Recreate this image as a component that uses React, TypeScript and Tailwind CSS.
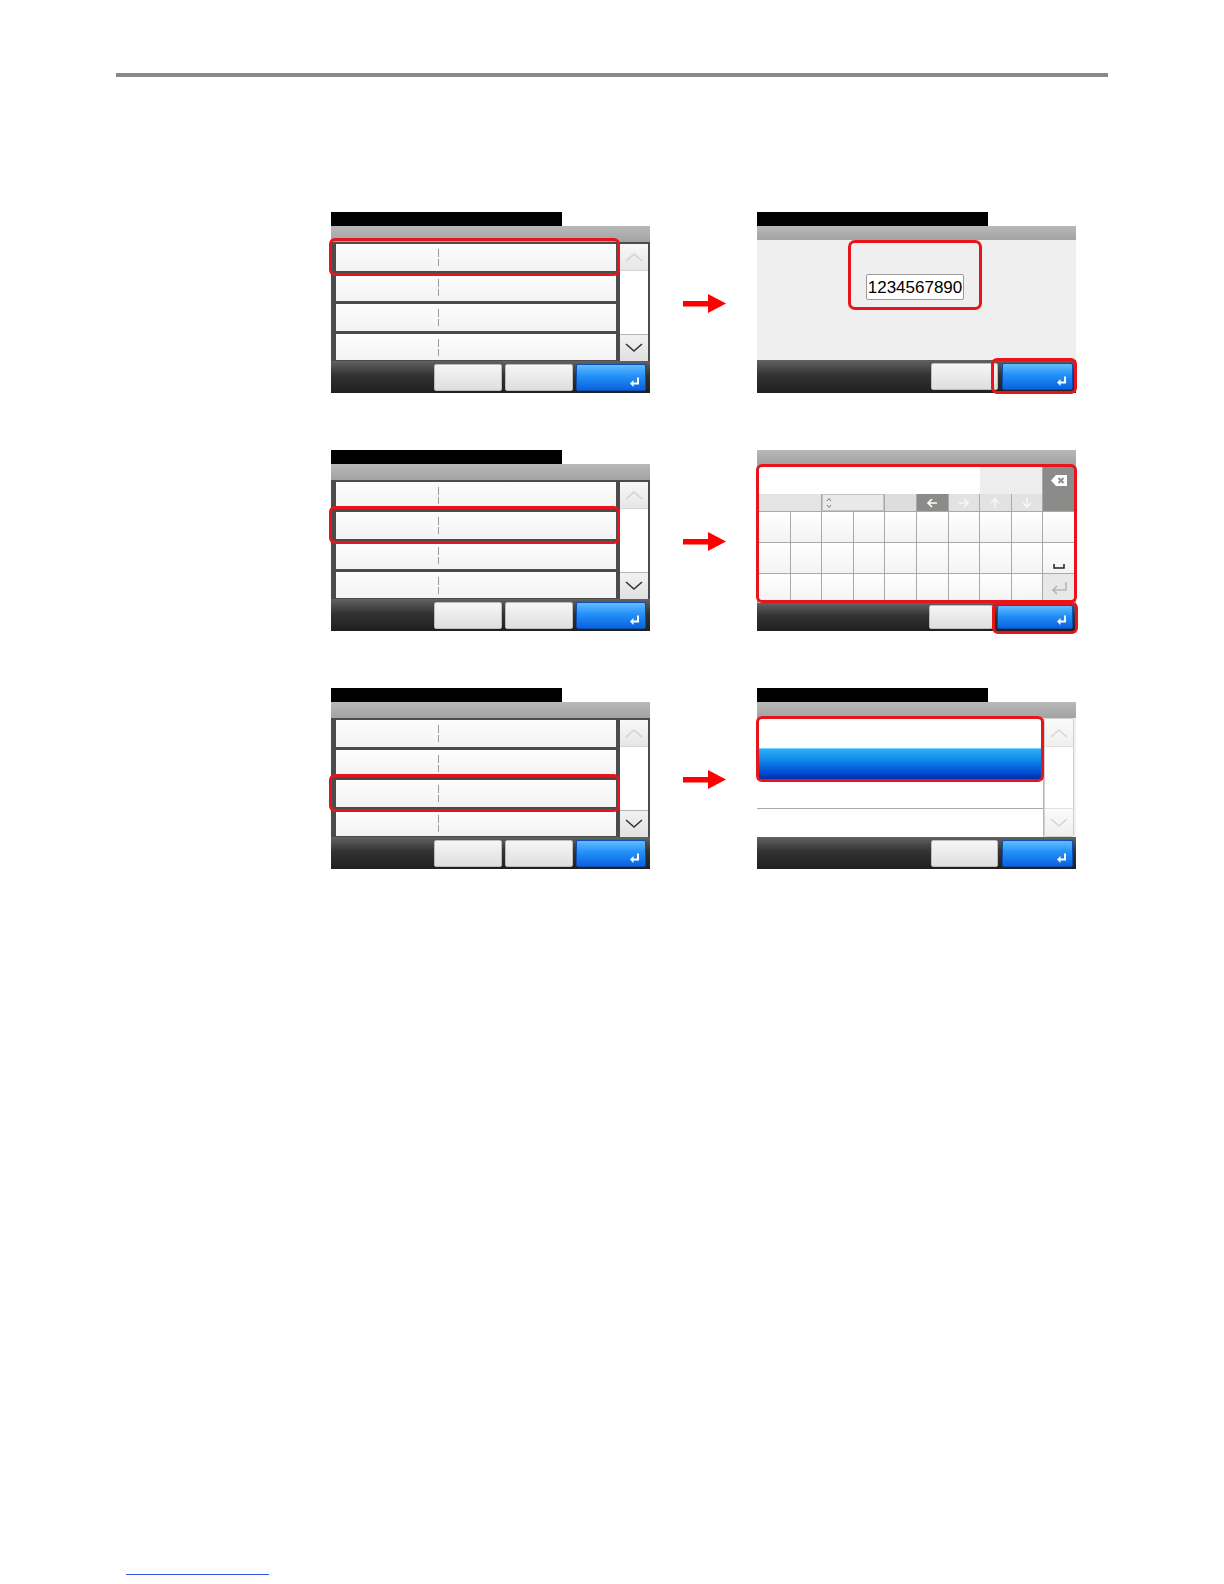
import React from "react";

const RED = "border-[3px] border-[#e8141c] rounded-[6px]";
const BAR = "bg-[linear-gradient(to_bottom,#626262,#333333_45%,#1f1f1f)]";
const GRAYBTN = "bg-[linear-gradient(to_bottom,#f6f6f6,#dedede)] border border-[#bcbcbc] rounded-[2px]";
const BLUEBTN = "relative bg-[linear-gradient(to_bottom,#63bcff,#2290f7_45%,#0a62e0)] border border-[#0d4fb0] rounded-[2px]";
const HEAD = "bg-[linear-gradient(to_bottom,#b8b8b8,#a3a3a3)]";

function EnterIcon() {
  return (
    <svg width="11" height="10" viewBox="0 0 11 10" className="absolute right-[5px] bottom-[3px]">
      <path d="M9 0.5 V6.5 H3.5" stroke="white" strokeWidth="2" fill="none" />
      <path d="M4.5 3 L1 6.5 L4.5 10 Z" fill="white" />
    </svg>
  );
}

function Chevron({ up, color }: { up?: boolean; color: string }) {
  return (
    <svg width="18" height="10" viewBox="0 0 18 10">
      <polyline
        points={up ? "1,9 9,2 17,9" : "1,1 9,8 17,1"}
        stroke={color}
        strokeWidth="1.6"
        fill="none"
      />
    </svg>
  );
}

function Arrow() {
  return (
    <div className="w-[107px] pl-[33px] pt-[82px]">
      <svg width="43" height="19" viewBox="0 0 43 19">
        <rect x="0" y="7" width="26" height="5.5" fill="#ff0000" />
        <polygon points="25,0 43,9.5 25,19" fill="#ff0000" />
      </svg>
    </div>
  );
}

function ListPanel({ hl }: { hl: number }) {
  const hs = ["h-[27px]", "h-[27px]", "h-[27px]", "h-[26px]"];
  return (
    <div className="w-[319px] flex flex-col">
      <div className="w-[231px] h-[14px] bg-black" />
      <div className={`h-[16px] ${HEAD}`} />
      <div className="h-[119px] flex bg-[#4b4b4b]">
        <div className="w-[289px] pl-[5px] pr-[4px] pt-[2px] flex flex-col gap-[3px]">
          {hs.map((h, i) => (
            <div
              key={i}
              className={`relative ${h} flex items-center bg-[linear-gradient(to_bottom,#fdfdfd,#f3f3f3)]`}
            >
              <div className="ml-[102px] flex flex-col gap-[2px]">
                <div className="w-px h-[8px] bg-[#9c9c9c]" />
                <div className="w-px h-[7px] bg-[#9c9c9c]" />
              </div>
              {hl === i && (
                <div className={`absolute -top-[6px] -bottom-[5px] -left-[7px] -right-[4px] z-10 ${RED}`} />
              )}
            </div>
          ))}
        </div>
        <div className="w-[28px] mt-[2px] flex flex-col bg-white">
          <div className="h-[27px] flex items-center justify-center bg-[linear-gradient(to_bottom,#f8f8f8,#e6e6e6)] border-b border-[#d4d4d4]">
            <Chevron up color="#d2d2d2" />
          </div>
          <div className="flex-1" />
          <div className="h-[27px] flex items-center justify-center bg-[linear-gradient(to_bottom,#f2f2f2,#e0e0e0)] border-t border-[#b4b4b4]">
            <Chevron color="#333333" />
          </div>
        </div>
        <div className="w-[2px]" />
      </div>
      <div className={`h-[32px] flex items-center justify-end pr-[4px] gap-[3px] ${BAR}`}>
        <div className={`w-[68px] h-[27px] ${GRAYBTN}`} />
        <div className={`w-[68px] h-[27px] ${GRAYBTN}`} />
        <div className={`w-[70px] h-[27px] ${BLUEBTN}`}>
          <EnterIcon />
        </div>
      </div>
    </div>
  );
}

function NumberPanel() {
  return (
    <div className="w-[319px] flex flex-col">
      <div className="w-[231px] h-[14px] bg-black" />
      <div className={`h-[14px] ${HEAD}`} />
      <div className="h-[120px] bg-[#efefef] pl-[91px]">
        <div className="w-[134px] h-[70px] flex justify-center pt-[31px] border-[3px] border-[#e8141c] rounded-[7px]">
          <div className="w-[98px] h-[26px] bg-white border border-[#9a9a9a] rounded-[2px] flex items-center justify-center text-[17px] leading-none text-black font-['Liberation_Sans',sans-serif]">
            1234567890
          </div>
        </div>
      </div>
      <div className={`h-[33px] flex items-center justify-end pr-[3px] gap-[4px] ${BAR}`}>
        <div className={`w-[67px] h-[27px] ${GRAYBTN}`} />
        <div className={`w-[71px] h-[27px] ${BLUEBTN}`}>
          <EnterIcon />
          <div className={`absolute -left-[12px] -right-[5px] -top-[6px] -bottom-[5px] z-10 ${RED}`} />
        </div>
      </div>
    </div>
  );
}

function SmallArrow({ dir, color }: { dir: "l" | "r" | "u" | "d"; color: string }) {
  const rot = dir === "l" ? 0 : dir === "r" ? 180 : dir === "u" ? 90 : 270;
  return (
    <svg width="12" height="12" viewBox="0 0 12 12" style={{ transform: `rotate(${rot}deg)` }}>
      <path d="M11 6 H2 M6 2 L2 6 L6 10" stroke={color} strokeWidth="1.6" fill="none" />
    </svg>
  );
}

function KeyboardPanel() {
  const keys = Array.from({ length: 30 }, (_, i) => i);
  return (
    <div className="w-[319px] flex flex-col">
      <div className={`h-[14px] ${HEAD}`} />
      <div className="relative h-[139px] bg-[#a9a9a9] pt-[2px] px-[2px] flex flex-col gap-px">
        <div className="grid grid-cols-10 grid-rows-[28px_17px] gap-x-px">
          <div className="col-span-9 flex">
            <div className="flex-[218] bg-white" />
            <div className="flex-[62] bg-[#eeeeee]" />
          </div>
          <div className="row-span-2 bg-[#8b8b89] flex justify-center pt-[9px]">
            <svg width="16" height="11" viewBox="0 0 16 11">
              <path d="M5 0 H16 V11 H5 L0 5.5 Z" fill="white" />
              <path d="M7.5 3 L12.5 8 M12.5 3 L7.5 8" stroke="#8b8b89" strokeWidth="1.8" />
            </svg>
          </div>
          <div className="col-span-2 bg-[#e4e4e4]" />
          <div className="col-span-2 bg-[#e9e9e9] border border-[#c4c4c4] flex items-center pl-[3px]">
            <svg width="6" height="12" viewBox="0 0 6 12">
              <path d="M1 4 L3 1.5 L5 4 M1 8 L3 10.5 L5 8" stroke="#777" strokeWidth="1" fill="none" />
            </svg>
          </div>
          <div className="bg-[#dddddd]" />
          <div className="bg-[#8b8b89] flex items-center justify-center">
            <SmallArrow dir="l" color="#ffffff" />
          </div>
          <div className="bg-[#e2e2e2] flex items-center justify-center">
            <SmallArrow dir="r" color="#f7f7f7" />
          </div>
          <div className="bg-[#e2e2e2] flex items-center justify-center">
            <SmallArrow dir="u" color="#f7f7f7" />
          </div>
          <div className="bg-[#e2e2e2] flex items-center justify-center">
            <SmallArrow dir="d" color="#f7f7f7" />
          </div>
        </div>
        <div className="grid grid-cols-10 grid-rows-[30px_30px_29px] gap-px">
          {keys.map((k) => {
            if (k === 19)
              return (
                <div key={k} className="bg-[linear-gradient(to_bottom,#ffffff,#f3f3f3)] flex items-end justify-center pb-[4px]">
                  <svg width="12" height="5" viewBox="0 0 12 5">
                    <path d="M1 0 V4 H11 V0" stroke="#222" strokeWidth="1.5" fill="none" />
                  </svg>
                </div>
              );
            if (k === 29)
              return (
                <div key={k} className="bg-[#e8e8e8] flex items-center justify-center">
                  <svg width="20" height="15" viewBox="0 0 20 15">
                    <path d="M17 1 V9 H4 M8 5 L4 9 L8 13" stroke="#b5b5b5" strokeWidth="1.6" fill="none" />
                  </svg>
                </div>
              );
            return <div key={k} className="bg-[linear-gradient(to_bottom,#ffffff,#f3f3f3)]" />;
          })}
        </div>
        <div className={`absolute -left-[1px] -right-[1px] top-0 bottom-0 z-10 ${RED}`} />
      </div>
      <div className={`h-[28px] flex items-center justify-end pr-[3px] gap-[4px] ${BAR}`}>
        <div className={`w-[64px] h-[24px] ${GRAYBTN}`} />
        <div className={`w-[76px] h-[24px] ${BLUEBTN}`}>
          <EnterIcon />
          <div className={`absolute -left-[6px] -right-[6px] -top-[4px] -bottom-[6px] z-10 ${RED}`} />
        </div>
      </div>
    </div>
  );
}

function SelectPanel() {
  return (
    <div className="w-[319px] flex flex-col">
      <div className="w-[231px] h-[14px] bg-black" />
      <div className={`h-[16px] ${HEAD}`} />
      <div className="h-[119px] flex bg-white">
        <div className="relative w-[287px] flex flex-col border-r border-[#b8b8b8]">
          <div className="h-[30px] bg-white" />
          <div className="h-[32px] border-t border-[#6fd0ff] bg-[linear-gradient(to_bottom,#2cb0f5,#1088ea_35%,#0050d2_75%,#0028aa)]" />
          <div className="h-[29px] border-b border-[#a8a8a8] bg-white" />
          <div className="flex-1 bg-white" />
          <div className={`absolute -top-[2px] h-[66px] -left-[1px] -right-[1px] z-10 ${RED}`} />
        </div>
        <div className="w-[30px] flex flex-col border border-[#cfcfcf] rounded-[2px]">
          <div className="h-[28px] flex items-center justify-center border-b border-[#e0e0e0] bg-[linear-gradient(to_bottom,#fbfbfb,#efefef)]">
            <Chevron up color="#d6d6d6" />
          </div>
          <div className="flex-1 bg-white" />
          <div className="h-[28px] flex items-center justify-center border-t border-[#e0e0e0] bg-[linear-gradient(to_bottom,#fbfbfb,#efefef)]">
            <Chevron color="#d6d6d6" />
          </div>
        </div>
        <div className="w-[2px] bg-[#f2f2f2]" />
      </div>
      <div className={`h-[32px] flex items-center justify-end pr-[3px] gap-[4px] ${BAR}`}>
        <div className={`w-[67px] h-[27px] ${GRAYBTN}`} />
        <div className={`w-[71px] h-[27px] ${BLUEBTN}`}>
          <EnterIcon />
        </div>
      </div>
    </div>
  );
}

export default function App() {
  return (
    <div className="w-[1224px] h-[1584px] bg-white overflow-hidden">
      <div className="pt-[73px] pl-[116px]">
        <div className="w-[992px] h-[4px] bg-[#8a8a8a]" />
      </div>
      <div className="mt-[135px] ml-[331px] flex flex-col gap-[57px]">
        <div className="flex items-start h-[181px]">
          <ListPanel hl={0} />
          <Arrow />
          <NumberPanel />
        </div>
        <div className="flex items-start h-[181px]">
          <ListPanel hl={1} />
          <Arrow />
          <KeyboardPanel />
        </div>
        <div className="flex items-start h-[181px]">
          <ListPanel hl={2} />
          <Arrow />
          <SelectPanel />
        </div>
      </div>
      <div className="mt-[705px] ml-[126px] w-[143px] h-px bg-[#3355ee]" />
    </div>
  );
}
